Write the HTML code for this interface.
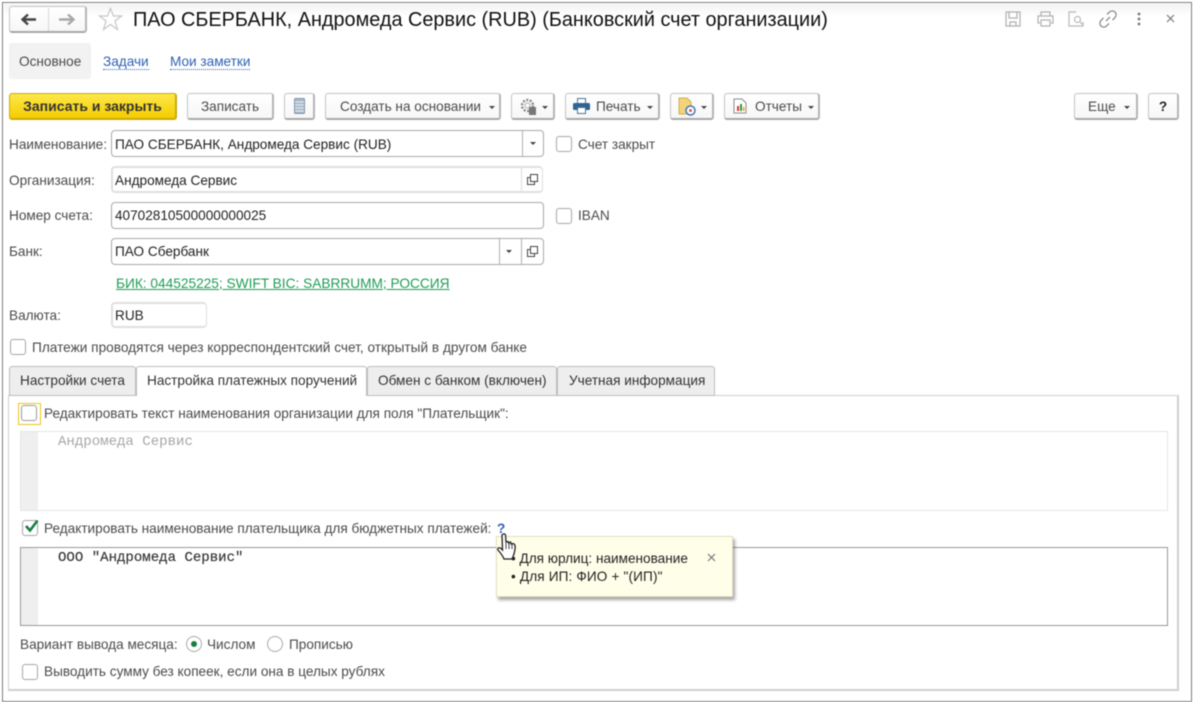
<!DOCTYPE html>
<html lang="ru"><head><meta charset="utf-8"><title>ПАО СБЕРБАНК</title>
<style>
html,body{margin:0;padding:0;background:#fff}
#p{position:relative;width:1193px;height:702px;overflow:hidden;background:#fff;font-family:"Liberation Sans",sans-serif;font-size:13.6px;color:#4b4b4b;filter:blur(.4px)}
#p div,#p a,#p svg{position:absolute}
.t{white-space:nowrap;line-height:20px;height:20px}
.b{box-sizing:border-box;height:27px;border:1px solid #c4c4c4;border-bottom:2px solid #a8a8a8;border-right:2px solid #b5b5b5;border-radius:3px;background:linear-gradient(#fff,#f7f7f7);}
.i{box-sizing:border-box;height:27px;border:1px solid #a9a9a9;border-radius:4px;background:#fff}
.il{border-color:#e0e0e0;border-width:2px 1px 2px 2px}
.v{width:1px;background:#b0b0b0}
.c{box-sizing:border-box;width:16px;height:16px;border:1.5px solid #a6a6a6;border-radius:3px;background:#fff}
.r{box-sizing:border-box;width:16px;height:16px;border:1.5px solid #aaa;border-radius:50%;background:#fff}
.d{width:0;height:0;border-left:3px solid transparent;border-right:3px solid transparent;border-top:3px solid #444}
.k{color:#222}
.tab{box-sizing:border-box;height:30px;top:366px;border:1px solid #bdbdbd;border-radius:3px 3px 0 0;background:#eee}
.m{font-family:"Liberation Mono",monospace;font-size:14.05px;font-weight:400}
.bt{text-align:center;color:#4b4b4b;line-height:25px}
</style></head><body><div id="p">

<!-- outer frame -->
<div style="left:2px;top:2px;width:1188px;height:698px;border:1px solid #7d7d7d;border-width:1.5px"></div>
<div style="left:4px;top:4px;width:1186px;height:12px;background:linear-gradient(#f3f3f3,#fff)"></div>

<!-- nav -->
<div class="b" style="left:9px;top:6px;width:78px;height:27px"></div>
<div class="v" style="left:48px;top:8px;height:23px;background:#d8d8d8"></div>
<svg style="left:21px;top:13px" width="16" height="13" viewBox="0 0 16 13"><path d="M1 6.500H15M7 1.500L1.500 6.500L7 11.500" fill="none" stroke="#444" stroke-width="2.400"/></svg>
<svg style="left:59px;top:13px" width="16" height="13" viewBox="0 0 16 13"><path d="M0 6.500H14M9 1.500L14.500 6.500L9 11.500" fill="none" stroke="#a8a8a8" stroke-width="2.400"/></svg>
<svg style="left:98px;top:7px" width="25" height="24" viewBox="0 0 25 24"><path d="M12.500 1.500L15.500 9H23.500L17 14L19.500 22.500L12.500 17.500L5.500 22.500L8 14L1.500 9H9.500Z" fill="#fff" stroke="#c6c6c6" stroke-width="1.200"/></svg>
<div class="t" style="left:133px;top:9px;font-size:19.87px;line-height:22px;height:22px;color:#111">ПАО СБЕРБАНК, Андромеда Сервис (RUB) (Банковский счет организации)</div>

<!-- top right icons -->
<svg style="left:1005px;top:11px" width="16" height="16" viewBox="0 0 16 16" fill="none" stroke="#b0b0b0" stroke-width="1.200"><path d="M1 1H15V15H1ZM4 1V7H12V1M5 11H11V15H5Z"/></svg>
<svg style="left:1037px;top:11px" width="17" height="16" viewBox="0 0 17 16" fill="none" stroke="#b0b0b0" stroke-width="1.200"><path d="M4 5V1H13V5M3 12H1V5H16V12H14M4 9H13V15H4Z"/></svg>
<svg style="left:1068px;top:11px" width="16" height="16" viewBox="0 0 16 16" fill="none" stroke="#b8b8b8" stroke-width="1.200"><path d="M8 1H1V15H15V11"/><circle cx="9.500" cy="8.500" r="3"/><path d="M12 11L14.500 13.500"/></svg>
<svg style="left:1099px;top:10px" width="18" height="18" viewBox="0 0 18 18" fill="none" stroke="#8e8e8e" stroke-width="1.300"><path d="M7 11L11 7M8 4.500L10.500 2A3 3 0 0 1 16 7.500L13.500 10M10 13.500L7.500 16A3 3 0 0 1 2 10.500L4.500 8"/></svg>
<svg style="left:1137px;top:12px" width="4" height="14" viewBox="0 0 4 14" fill="#777"><circle cx="2" cy="2" r="1.400"/><circle cx="2" cy="7" r="1.400"/><circle cx="2" cy="12" r="1.400"/></svg>
<svg style="left:1166px;top:14px" width="9" height="9" viewBox="0 0 9 9" stroke="#777" stroke-width="1.200"><path d="M1 1L8 8M8 1L1 8"/></svg>

<!-- nav tabs -->
<div style="left:9px;top:43px;width:82px;height:36px;background:#f2f2f2;border-radius:3px"></div>
<div class="t" style="left:19px;top:52px">Основное</div>
<a class="t" style="left:103px;top:52px;color:#2e62b4;border-bottom:1px dotted #2e62b4;height:17px">Задачи</a>
<a class="t" style="left:170px;top:52px;color:#2e62b4;border-bottom:1px dotted #2e62b4;height:17px">Мои заметки</a>

<!-- toolbar -->
<div class="b bt" style="left:9px;top:93px;width:168px;background:linear-gradient(#fde84a,#f5cd00);border-color:#c9ab10;color:#333;font-weight:700;font-size:14px">Записать и закрыть</div>
<div class="b bt" style="left:187px;top:93px;width:87px">Записать</div>
<div class="b" style="left:284px;top:93px;width:31px"></div>
<svg style="left:294px;top:98px" width="11" height="16" viewBox="0 0 11 16"><rect x=".5" y=".5" width="10" height="15" rx="1" fill="#a9bccd" stroke="#7f96ab"/><path d="M1 4H10M1 7H10M1 10H10M1 13H10" stroke="#e8eef3"/></svg>
<div class="b" style="left:325px;top:93px;width:176px"></div>
<div class="t" style="left:340px;top:97px">Создать на основании</div>
<div class="d" style="left:489px;top:106px"></div>
<div class="b" style="left:511px;top:93px;width:44px"></div>
<svg style="left:519px;top:97px" width="19" height="19" viewBox="0 0 19 19" fill="none"><circle cx="8.500" cy="8.500" r="5.500" stroke="#8a8a8a" stroke-width="2.500" stroke-dasharray="2 1.500"/><circle cx="8.500" cy="8.500" r="2.500" stroke="#aaa"/><rect x="10" y="10" width="7" height="8" fill="#777"/></svg>
<div class="d" style="left:542px;top:106px"></div>
<div class="b" style="left:565px;top:93px;width:95px"></div>
<svg style="left:573px;top:98px" width="17" height="16" viewBox="0 0 17 16"><rect x="4.500" y=".5" width="8" height="5" fill="#fff" stroke="#4d7296"/><rect x="0" y="5" width="17" height="7" rx="1.500" fill="#2f6391"/><rect x="4.500" y="9.500" width="8" height="6" fill="#fff" stroke="#4d7296"/></svg>
<div class="t" style="left:596px;top:97px">Печать</div>
<div class="d" style="left:647px;top:106px"></div>
<div class="b" style="left:670px;top:93px;width:44px"></div>
<svg style="left:678px;top:97px" width="18" height="19" viewBox="0 0 18 19"><path d="M1 1H9L13 5V17H1Z" fill="#f3d37a" stroke="#d3ad4a"/><circle cx="12.500" cy="13.500" r="4.500" fill="#fff" stroke="#3f78b5" stroke-width="1.500"/><circle cx="12.500" cy="13.500" r="1.500" fill="#d2574b"/></svg>
<div class="d" style="left:701px;top:106px"></div>
<div class="b" style="left:724px;top:93px;width:96px"></div>
<svg style="left:733px;top:98px" width="14" height="16" viewBox="0 0 14 16"><path d="M1 1H9L13 5V15H1Z" fill="#fff" stroke="#8a8a8a"/><rect x="4" y="8" width="2" height="5" fill="#d33"/><rect x="7" y="6" width="2" height="7" fill="#2a9a3c"/><rect x="10" y="9" width="1.500" height="4" fill="#e0a020"/></svg>
<div class="t" style="left:755px;top:97px">Отчеты</div>
<div class="d" style="left:808px;top:106px"></div>
<div class="b" style="left:1074px;top:93px;width:64px"></div>
<div class="t" style="left:1088px;top:97px">Еще</div>
<div class="d" style="left:1124px;top:106px"></div>
<div class="b bt" style="left:1148px;top:93px;width:31px;color:#222;font-weight:700">?</div>

<!-- Fields -->
<div class="t" style="left:9px;top:135px">Наименование:</div>
<div class="i" style="left:111px;top:130px;width:433px"></div>
<div class="t k" style="left:115px;top:135px">ПАО СБЕРБАНК, Андромеда Сервис (RUB)</div>
<div class="v" style="left:522px;top:131px;height:25px"></div>
<div class="d" style="left:530px;top:142px"></div>
<div class="c" style="left:556px;top:136px"></div>
<div class="t" style="left:578px;top:135px">Счет закрыт</div>

<div class="t" style="left:9px;top:171px">Организация:</div>
<div class="i il" style="left:111px;top:166px;width:432px"></div>
<div class="t k" style="left:115px;top:171px">Андромеда Сервис</div>
<div class="v" style="left:521px;top:168px;height:23px;background:#dcdcdc"></div>
<svg class="o" style="left:527px;top:174px" width="11" height="11" viewBox="0 0 11 11" fill="none" stroke="#444"><path d="M3.500 .5H10.500V7.500H3.500Z"/><path d="M3.500 3.500H.5V10.500H7.500V7.500"/></svg>

<div class="t" style="left:9px;top:206px">Номер счета:</div>
<div class="i" style="left:111px;top:202px;width:433px"></div>
<div class="t k" style="left:115px;top:206px">40702810500000000025</div>
<div class="c" style="left:556px;top:208px"></div>
<div class="t" style="left:578px;top:206px">IBAN</div>

<div class="t" style="left:9px;top:242px">Банк:</div>
<div class="i" style="left:111px;top:238px;width:433px"></div>
<div class="t k" style="left:115px;top:242px">ПАО Сбербанк</div>
<div class="v" style="left:499px;top:239px;height:25px"></div>
<div class="d" style="left:506px;top:250px"></div>
<div class="v" style="left:521px;top:239px;height:25px"></div>
<svg style="left:527px;top:246px" width="11" height="11" viewBox="0 0 11 11" fill="none" stroke="#444"><path d="M3.500 .5H10.500V7.500H3.500Z"/><path d="M3.500 3.500H.5V10.500H7.500V7.500"/></svg>

<a class="t" style="left:116px;top:274px;color:#1f9d55;text-decoration:underline;font-size:13.7px">БИК: 044525225; SWIFT BIC: SABRRUMM; РОССИЯ</a>

<div class="t" style="left:9px;top:306px">Валюта:</div>
<div class="i il" style="left:111px;top:302px;width:96px;height:26px"></div>
<div class="t k" style="left:115px;top:306px">RUB</div>

<div class="c" style="left:10px;top:339px"></div>
<div class="t" style="left:32px;top:338px;font-size:13.67px">Платежи проводятся через корреспондентский счет, открытый в другом банке</div>

<!-- tabs panel -->
<div style="box-sizing:border-box;left:8px;top:395px;width:1171px;height:296px;border:1px solid #cfcfcf;border-right-width:2px;border-bottom-width:2px"></div>
<div class="tab" style="left:9px;width:127px"></div>
<div class="t" style="left:20px;top:371px;color:#333">Настройки счета</div>
<div class="tab" style="left:136px;width:231px;height:30px;background:#fff;border-bottom:0;z-index:2"></div>
<div class="t" style="left:147px;top:371px;color:#333;z-index:3">Настройка платежных поручений</div>
<div class="tab" style="left:367px;width:190px"></div>
<div class="t" style="left:378px;top:371px;color:#333">Обмен с банком (включен)</div>
<div class="tab" style="left:557px;width:158px"></div>
<div class="t" style="left:569px;top:371px;color:#333">Учетная информация</div>

<div style="box-sizing:border-box;left:18px;top:403px;width:23px;height:22px;border:1px solid #f0c419"></div>
<div class="c" style="left:21px;top:405px;border-color:#999"></div>
<div class="t" style="left:44px;top:404px">Редактировать текст наименования организации для поля "Плательщик":</div>

<div style="box-sizing:border-box;left:20px;top:431px;width:1148px;height:80px;border:1px solid #e6e6e6;background:#fff"></div>
<div style="left:21px;top:432px;width:17px;height:78px;background:#efefef"></div>
<div class="t m" style="left:58px;top:432px;color:#a6a6a6">Андромеда Сервис</div>

<div class="c" style="left:22px;top:520px"></div>
<svg style="left:23px;top:518px" width="17" height="16" viewBox="0 0 17 16"><path d="M3 8L7 12.500L14.500 2.500" fill="none" stroke="#15803f" stroke-width="2.600"/></svg>
<div class="t" style="left:44px;top:519px">Редактировать наименование плательщика для бюджетных платежей:</div>
<a class="t" style="left:497px;top:519px;color:#2e62b4;font-weight:700;height:18px;border-bottom:1px dotted #2e62b4">?</a>

<div style="box-sizing:border-box;left:20px;top:547px;width:1148px;height:79px;border:1px solid #999;background:#fff"></div>
<div style="left:21px;top:548px;width:17px;height:77px;background:#efefef"></div>
<div class="t m" style="left:58px;top:548px;color:#333;-webkit-text-stroke:.15px #333">ООО "Андромеда Сервис"</div>

<!-- tooltip -->
<div style="box-sizing:border-box;left:496px;top:536px;width:237px;height:61px;background:#fffee9;border:1px solid #e3e0c0;box-shadow:2px 3px 3px rgba(0,0,0,.35);z-index:5"></div>
<div class="t k" style="left:511px;top:549px;z-index:6">• Для юрлиц: наименование</div>
<div class="t k" style="left:511px;top:567px;z-index:6;letter-spacing:.15px">• Для ИП: ФИО + "(ИП)"</div>
<svg style="left:707px;top:553px;z-index:6" width="9" height="9" viewBox="0 0 9 9" stroke="#777" stroke-width="1.200"><path d="M1 1L8 8M8 1L1 8"/></svg>
<svg style="left:497px;top:533px;z-index:7" width="20" height="28" viewBox="0 0 20 28"><path d="M5 2C6 0.500 8 .5 8.500 2L9 9L11 8.500L11.500 10L13.500 9L14 11L16 10.500C18 11 18.500 13 18 16C17.500 20 16.500 23 15 26H7C5.500 22 3 19.500 1 17C0 15 2 14 4 15.500L5.500 17Z" fill="#fff" stroke="#222" stroke-width="1.300"/><path d="M9 10V16M12 10V16M15 11V16" stroke="#444"/></svg>

<!-- bottom -->
<div class="t" style="left:20px;top:635px">Вариант вывода месяца:</div>
<div class="r" style="left:186px;top:636px"></div>
<div style="left:191px;top:641px;width:6px;height:6px;border-radius:50%;background:#15803f"></div>
<div class="t" style="left:207px;top:635px">Числом</div>
<div class="r" style="left:267px;top:636px"></div>
<div class="t" style="left:289px;top:635px">Прописью</div>
<div class="c" style="left:22px;top:664px"></div>
<div class="t" style="left:44px;top:662px">Выводить сумму без копеек, если она в целых рублях</div>

</div></body></html>
